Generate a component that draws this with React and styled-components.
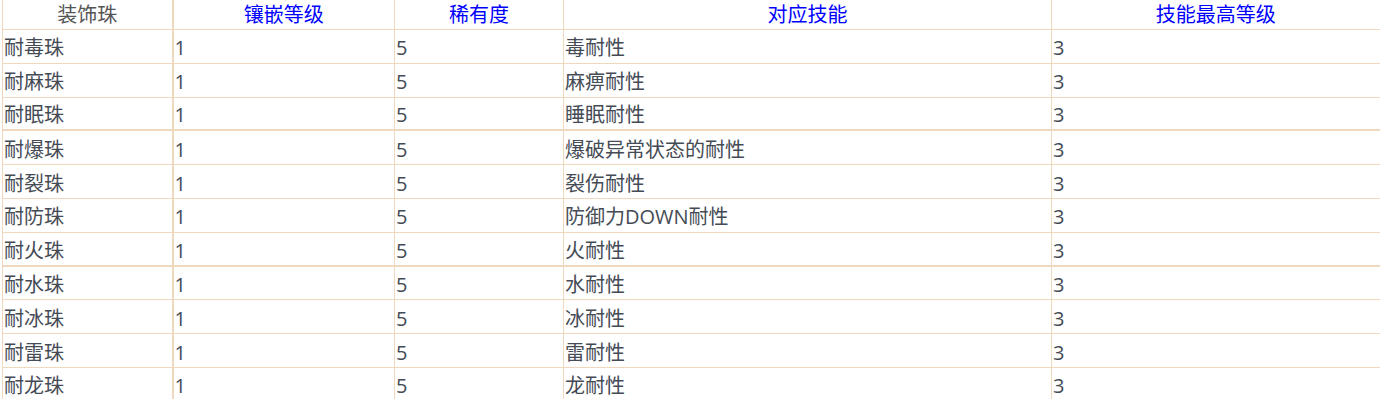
import React from 'react';
import styled, { createGlobalStyle } from 'styled-components';

const GlobalStyle = createGlobalStyle`
  body {
    margin: 0;
    background: #fff;
    font-family: "Open Sans", "Noto Sans CJK SC", sans-serif;
  }
`;

const columns = [
  { title: '装饰珠', width: 170, plain: true },
  { title: '镶嵌等级', width: 222 },
  { title: '稀有度', width: 169 },
  { title: '对应技能', width: 488 },
  { title: '技能最高等级', width: 328 },
];

const rows = [
  ['耐毒珠', '毒耐性'],
  ['耐麻珠', '麻痹耐性'],
  ['耐眠珠', '睡眠耐性', true],
  ['耐爆珠', '爆破异常状态的耐性'],
  ['耐裂珠', '裂伤耐性'],
  ['耐防珠', '防御力DOWN耐性'],
  ['耐火珠', '火耐性', true],
  ['耐水珠', '水耐性'],
  ['耐冰珠', '冰耐性'],
  ['耐雷珠', '雷耐性'],
  ['耐龙珠', '龙耐性'],
];

const App = () => {
  return (
    <Page>
      <GlobalStyle />
      <Table>
        <colgroup>
          {columns.map((c) => (
            <col key={c.title} style={{ width: c.width }} />
          ))}
        </colgroup>
        <thead>
          <tr>
            {columns.map((c, i) => (
              <HeadCell key={c.title} plain={c.plain} first={i === 0}>
                {c.title}
              </HeadCell>
            ))}
          </tr>
        </thead>
        <tbody>
          {rows.map(([name, skill, thick]) => (
            <Row key={name} thick={thick}>
              <Cell first thick={thick}>{name}</Cell>
              <Cell thick={thick}>1</Cell>
              <Cell thick={thick}>5</Cell>
              <Cell thick={thick}>{skill}</Cell>
              <Cell thick={thick}>3</Cell>
            </Row>
          ))}
        </tbody>
      </Table>
    </Page>
  );
};

const Page = styled.div`
  padding-left: 2px;
`;

const Table = styled.table`
  border-collapse: collapse;
  table-layout: fixed;
  width: 1377px;
  font-size: 20px;
  color: #454b55;
`;

const HeadCell = styled.th`
  height: 29px;
  padding: 0;
  font-weight: normal;
  text-align: center;
  vertical-align: middle;
  line-height: 26px;
  color: ${(p) => (p.plain ? '#555' : '#0000ff')};
  border-bottom: 1px solid #efd8bd;
  border-left: 1px solid #efd8bd;
  ${(p) => p.first && 'border-right: 2px solid #efd8bd;'}
`;

const Row = styled.tr`
  border-bottom: ${(p) => (p.thick ? '2px' : '1px')} solid #efd8bd;
`;

const Cell = styled.td`
  height: ${(p) => (p.thick ? '27.8px' : '28.8px')};
  padding: 4px 0 0 1px;
  text-align: left;
  vertical-align: middle;
  line-height: 26px;
  white-space: nowrap;
  border-left: 1px solid #efd8bd;
  ${(p) => p.first && 'border-right: 2px solid #efd8bd;'}
`;

export default App;
